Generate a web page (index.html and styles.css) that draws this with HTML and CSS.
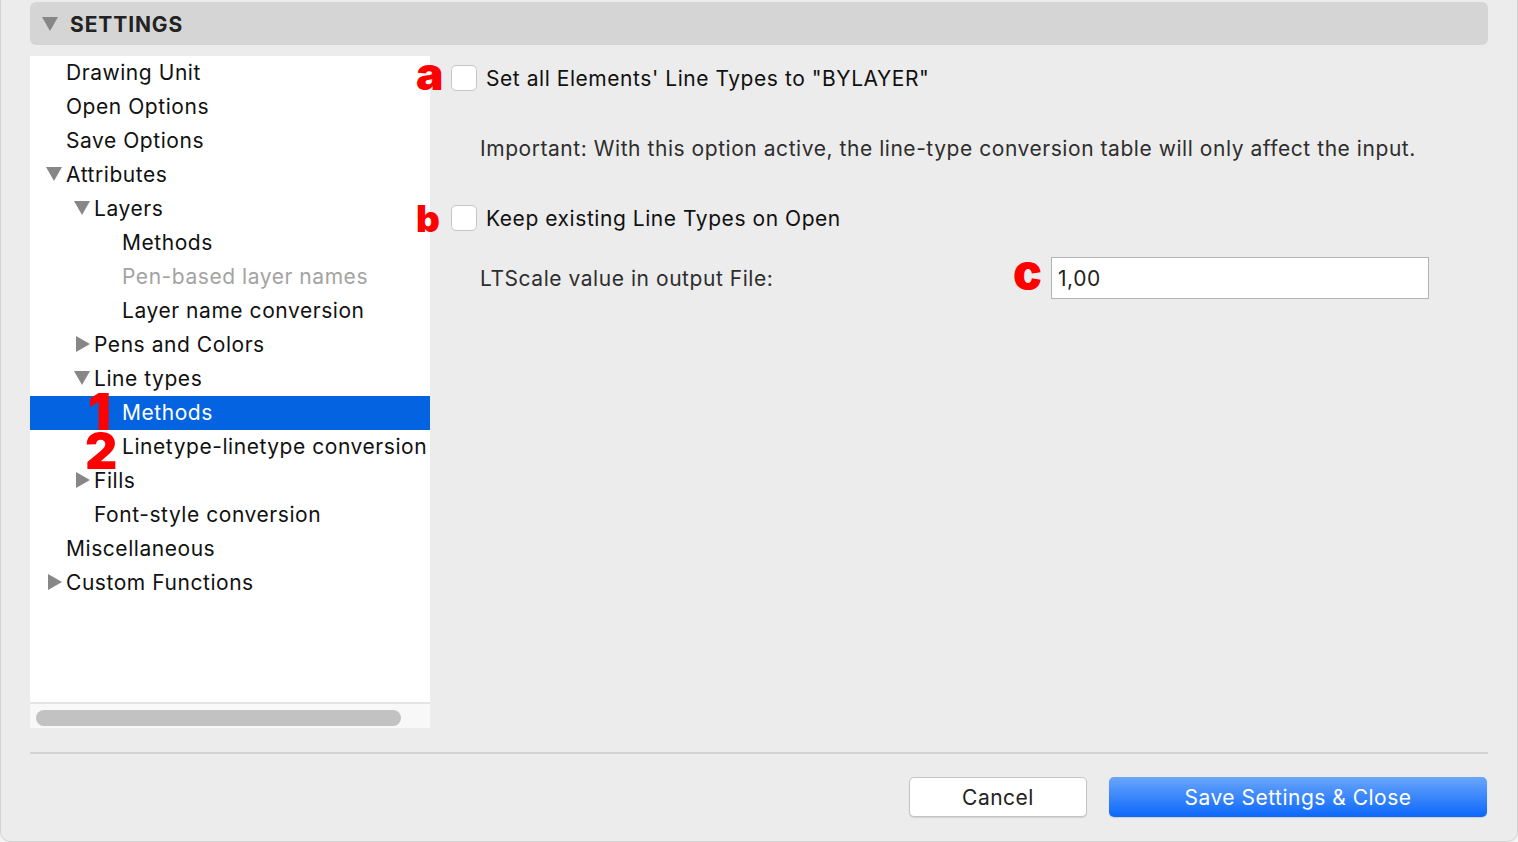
FILE: index.html
```html
<!DOCTYPE html>
<html lang="en">
<head>
    <meta charset="UTF-8">
    <meta name="viewport" content="width=device-width, initial-scale=1.0">
    <title>Settings</title>
    <link rel="stylesheet" href="styles.css">
</head>
<body>
    <div class="window">
        <div class="header">
            <span class="tri-down header-tri"></span>
            <span class="header-title">SETTINGS</span>
        </div>

        <div class="main">
            <div class="sidebar">
                <ul class="tree">
                    <li class="row lvl-0"><span class="twisty"></span>Drawing Unit</li>
                    <li class="row lvl-0"><span class="twisty"></span>Open Options</li>
                    <li class="row lvl-0"><span class="twisty"></span>Save Options</li>
                    <li class="row lvl-0"><span class="twisty"><span class="tri-down"></span></span>Attributes</li>
                    <li class="row lvl-1"><span class="twisty"><span class="tri-down"></span></span>Layers</li>
                    <li class="row lvl-2"><span class="twisty"></span>Methods</li>
                    <li class="row lvl-2 disabled"><span class="twisty"></span>Pen-based layer names</li>
                    <li class="row lvl-2"><span class="twisty"></span>Layer name conversion</li>
                    <li class="row lvl-1"><span class="twisty"><span class="tri-right"></span></span>Pens and Colors</li>
                    <li class="row lvl-1"><span class="twisty"><span class="tri-down"></span></span>Line types</li>
                    <li class="row lvl-2 selected"><span class="twisty"></span>Methods<span class="mark mark-1">1</span></li>
                    <li class="row lvl-2"><span class="twisty"></span>Linetype-linetype conversion<span class="mark mark-2">2</span></li>
                    <li class="row lvl-1"><span class="twisty"><span class="tri-right"></span></span>Fills</li>
                    <li class="row lvl-1"><span class="twisty"></span>Font-style conversion</li>
                    <li class="row lvl-0"><span class="twisty"></span>Miscellaneous</li>
                    <li class="row lvl-0"><span class="twisty"><span class="tri-right"></span></span>Custom Functions</li>
                </ul>
                <div class="hscroll">
                    <div class="thumb"></div>
                </div>
            </div>

            <div class="content">
                <label class="check-row first">
                    <span class="mark mark-a">a</span>
                    <span class="checkbox"></span>
                    Set all Elements' Line Types to "BYLAYER"
                </label>
                <p class="note">Important: With this option active, the line-type conversion table will only affect the input.</p>
                <label class="check-row">
                    <span class="mark mark-b">b</span>
                    <span class="checkbox"></span>
                    Keep existing Line Types on Open
                </label>
                <div class="field-row">
                    <span class="field-label">LTScale value in output File:</span>
                    <span class="field">
                        <span class="mark mark-c">c</span>
                        <span class="input">1,00</span>
                    </span>
                </div>
            </div>
        </div>

        <div class="footer">
            <button class="btn">Cancel</button>
            <button class="btn primary">Save Settings &amp; Close</button>
        </div>
    </div>
</body>
</html>
```

FILE: styles.css
```css
body {
    margin: 0;
    background: #f4f4f4;
    font-family: Inter, "Noto Sans", sans-serif;
    color: #111;
}
.window {
    box-sizing: border-box;
    width: 1518px;
    height: 842px;
    background: #ececec;
    border: 1px solid #d4d4d4;
    border-top: none;
    border-radius: 0 0 10px 10px;
    padding: 2px 29px 0 29px;
    display: flex;
    flex-direction: column;
}

/* header bar */
.header {
    height: 43px;
    background: #d5d5d5;
    border-radius: 6px;
    display: flex;
    align-items: center;
    padding-left: 12px;
}
.header-tri {
    margin-right: 12px;
    margin-top: 1px;
}
.header-title {
    font-size: 21px;
    font-weight: 700;
    color: #222;
    letter-spacing: 0.9px;
    padding-top: 2px;
}

.tri-down {
    display: block;
    width: 0;
    height: 0;
    border-left: 8px solid transparent;
    border-right: 8px solid transparent;
    border-top: 14px solid #878787;
}
.tri-right {
    display: block;
    width: 0;
    height: 0;
    margin-left: 2px;
    border-top: 8px solid transparent;
    border-bottom: 8px solid transparent;
    border-left: 14px solid #878787;
}

.main {
    display: flex;
    margin-top: 11px;
}

/* tree */
.sidebar {
    width: 400px;
    flex: none;
    display: flex;
    flex-direction: column;
}
.tree {
    list-style: none;
    margin: 0;
    padding: 0;
    height: 646px;
    background: #fff;
}
.row {
    position: relative;
    box-sizing: border-box;
    height: 34px;
    padding-bottom: 2px;
    display: flex;
    align-items: center;
    font-size: 21px;
    letter-spacing: 0.55px;
    white-space: nowrap;
}
.twisty {
    width: 20px;
    flex: none;
    display: flex;
    align-items: center;
}
.lvl-0 { padding-left: 16px; }
.lvl-1 { padding-left: 44px; }
.lvl-2 { padding-left: 72px; }
.disabled { color: #a3a3a3; }
.selected {
    background: #0463e1;
    color: #fff;
}

.hscroll {
    height: 26px;
    background: #f8f8f8;
    border-top: 2px solid #e4e4e4;
    padding: 6px 29px 0 6px;
    box-sizing: border-box;
}
.thumb {
    height: 16px;
    border-radius: 8px;
    background: #c2c2c2;
}

/* red annotation marks */
.mark {
    position: absolute;
    color: #ff0000;
    font-family: Inter, "Liberation Sans", sans-serif;
    font-weight: 900;
    letter-spacing: 0;
}
.mark-1 {
    font-size: 51px;
    line-height: 36px;
    left: 58px;
    top: -2px;
}
.mark-2 {
    font-size: 50px;
    line-height: 36px;
    left: 55px;
    top: 3px;
}
.mark-a {
    font-size: 46px;
    line-height: 30px;
    left: -35px;
    top: -5px;
}
.mark-b {
    font-size: 37px;
    line-height: 30px;
    left: -35px;
    top: 1px;
}
.mark-c {
    font-size: 48px;
    line-height: 30px;
    left: -38px;
    top: 0;
}

/* right side */
.content {
    flex: 1;
    padding-left: 21px;
    font-size: 21px;
    letter-spacing: 0.55px;
}
.check-row {
    position: relative;
    display: flex;
    align-items: center;
    height: 30px;
}
.check-row.first {
    margin-top: 7px;
}
.checkbox {
    width: 26px;
    height: 26px;
    box-sizing: border-box;
    background: #fff;
    border: 1px solid #c6c6c6;
    border-radius: 5px;
    margin-right: 9px;
    flex: none;
}
.note {
    margin: 40px 0 40px 29px;
    height: 30px;
    line-height: 32px;
    color: #2e2e2e;
}
.field-row {
    display: flex;
    align-items: center;
    margin-top: 24px;
    padding-left: 29px;
}
.field-label {
    width: 571px;
    color: #2e2e2e;
}
.field {
    position: relative;
}
.input {
    display: flex;
    align-items: center;
    box-sizing: border-box;
    width: 378px;
    height: 42px;
    background: #fff;
    border: 1px solid #b3b3b3;
    padding-left: 6px;
    color: #222;
}

/* footer */
.footer {
    margin-top: 24px;
    border-top: 2px solid #d3d3d3;
    display: flex;
    justify-content: flex-end;
    gap: 22px;
    padding-top: 23px;
    padding-right: 1px;
}
.btn {
    font-family: Inter, "Noto Sans", sans-serif;
    font-size: 21px;
    letter-spacing: 0.5px;
    height: 40px;
    border-radius: 5px;
    cursor: pointer;
}
.btn {
    width: 178px;
    background: #fff;
    border: 1px solid #c4c4c4;
    box-shadow: 0 1px 1px rgba(0, 0, 0, 0.12);
    color: #222;
}
.btn.primary {
    width: 378px;
    border: none;
    color: #fff;
    background: linear-gradient(#6aa6fc, #0b67fb);
}
```
